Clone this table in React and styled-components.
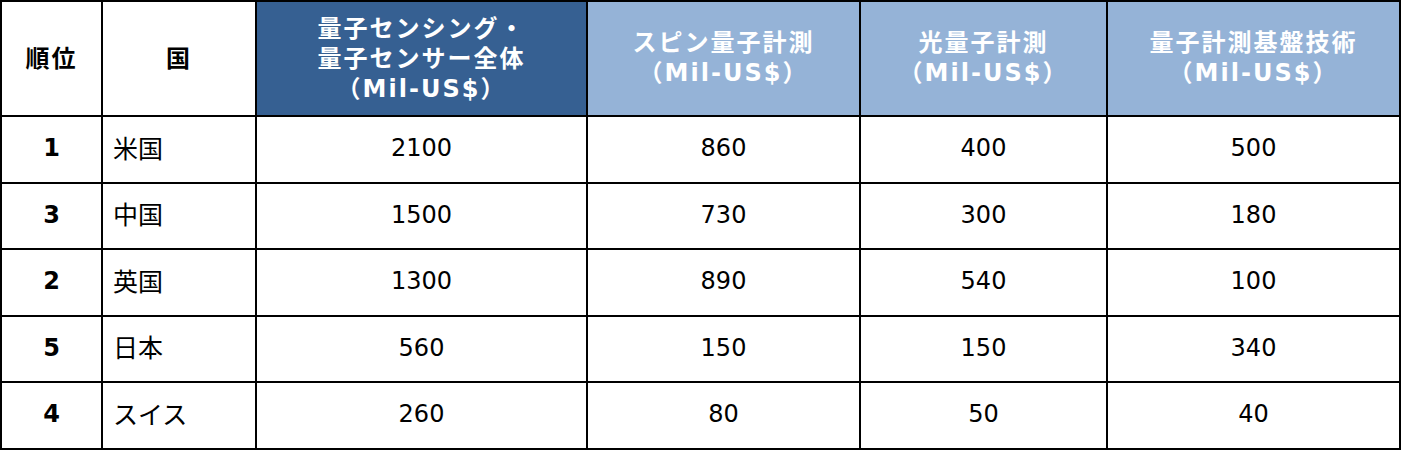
import React from "react";
import styled, { createGlobalStyle } from "styled-components";

const Global = createGlobalStyle`
  html, body { margin: 0; padding: 0; background: #ffffff; }
  body { font-family: "DejaVu Sans", "Noto Sans CJK JP", sans-serif; }
`;

const Table = styled.div`
  display: grid;
  grid-template-columns: 99px 152px 329px 271px 245px 291px;
  grid-template-rows: 113px 65px 64px 65px 64px 65px;
  gap: 2px;
  padding: 2px;
  background: #000000;
  width: max-content;
`;

const HeadCell = styled.div`
  display: flex;
  align-items: center;
  justify-content: center;
  text-align: center;
  font-family: "DejaVu Sans", "Noto Sans CJK JP", sans-serif;
  font-weight: bold;
  font-size: 24px;
  line-height: 30px;
  letter-spacing: 2px;
  color: ${(p) => (p.$tone === "plain" ? "#000000" : "#ffffff")};
  background: ${(p) =>
    p.$tone === "dark" ? "#366092" : p.$tone === "light" ? "#95b3d7" : "#ffffff"};
  padding-bottom: ${(p) => (p.$tone === "light" ? "2px" : "0")};
`;

const HeadLine = styled.div`
  white-space: nowrap;
`;

const Cell = styled.div`
  display: flex;
  align-items: center;
  justify-content: ${(p) => (p.$align === "left" ? "flex-start" : "center")};
  padding: 0 0 ${(p) => (p.$align === "left" ? "6px" : "3px")}
    ${(p) => (p.$align === "left" ? "10px" : "0")};
  background: #ffffff;
  color: #000000;
  font-family: "DejaVu Sans", "Noto Sans CJK JP", sans-serif;
  font-size: ${(p) => (p.$align === "left" ? "25px" : "24px")};
  font-weight: ${(p) => (p.$bold ? "bold" : "normal")};
`;

const headers = [
  { tone: "plain", lines: ["順位"] },
  { tone: "plain", lines: ["国"] },
  { tone: "dark", lines: ["量子センシング・", "量子センサー全体", "（Mil-US$）"] },
  { tone: "light", lines: ["スピン量子計測", "（Mil-US$）"] },
  { tone: "light", lines: ["光量子計測", "（Mil-US$）"] },
  { tone: "light", lines: ["量子計測基盤技術", "（Mil-US$）"] },
];

const rows = [
  ["1", "米国", "2100", "860", "400", "500"],
  ["3", "中国", "1500", "730", "300", "180"],
  ["2", "英国", "1300", "890", "540", "100"],
  ["5", "日本", "560", "150", "150", "340"],
  ["4", "スイス", "260", "80", "50", "40"],
];

export default function App() {
  return (
    <>
      <Global />
      <Table>
        {headers.map((h, i) => (
          <HeadCell key={i} $tone={h.tone}>
            <div>
              {h.lines.map((l, j) => (
                <HeadLine key={j}>{l}</HeadLine>
              ))}
            </div>
          </HeadCell>
        ))}
        {rows.map((r, ri) =>
          r.map((v, ci) => (
            <Cell
              key={`${ri}-${ci}`}
              $bold={ci === 0}
              $align={ci === 1 ? "left" : "center"}
            >
              {v}
            </Cell>
          ))
        )}
      </Table>
    </>
  );
}
